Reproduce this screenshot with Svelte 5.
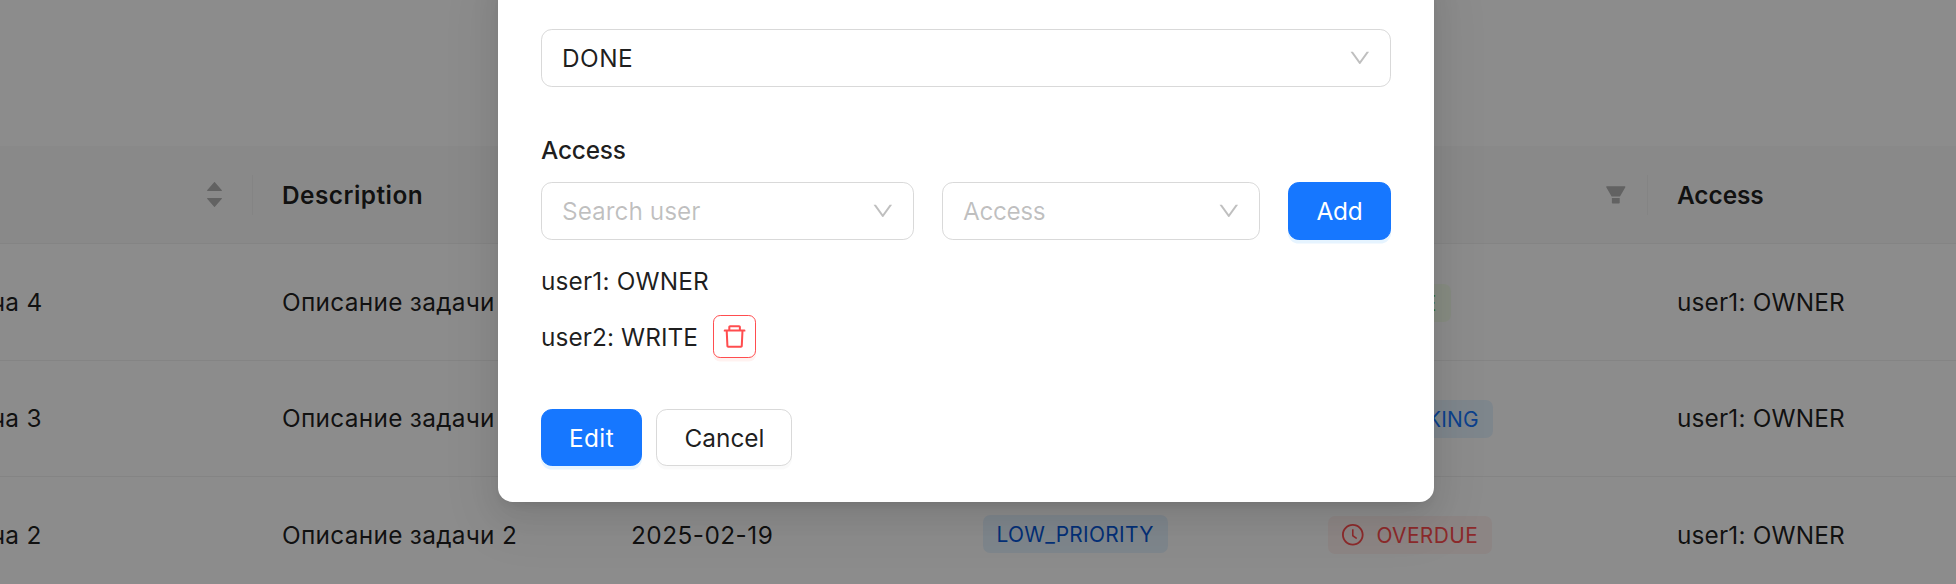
<script>
  const clock = [
    'M512 64C264.6 64 64 264.6 64 512s200.6 448 448 448 448-200.6 448-448S759.4 64 512 64zm0 820c-205.4 0-372-166.6-372-372s166.6-372 372-372 372 166.6 372 372-166.6 372-372 372z',
    'M686.7 638.6L544.1 535.5V288c0-4.4-3.6-8-8-8H488c-4.4 0-8 3.6-8 8v275.4c0 2.6 1.2 5 3.3 6.5l165.4 120.6c3.6 2.6 8.6 1.8 11.2-1.7l28.6-39c2.6-3.7 1.8-8.7-1.8-11.2z',
  ];
  const rows = [
    { title: 'Задача 4', description: 'Описание задачи', status: 'DONE', tone: 'success' },
    { title: 'Задача 3', description: 'Описание задачи', status: 'WORKING', tone: 'processing' },
    { title: 'Задача 2', description: 'Описание задачи 2', date: '2025-02-19', priority: 'LOW_PRIORITY', status: 'OVERDUE', tone: 'error' },
  ];
</script>

{#snippet arrow()}
  <svg class="icon arrow" viewBox="64 64 896 896"><path d="M884 256h-75c-5.1 0-9.9 2.5-12.9 6.6L512 654.2 227.9 262.6c-3-4.1-7.8-6.6-12.9-6.6h-75c-6.5 0-10.3 7.4-6.5 12.7l352.6 486.1c12.8 17.6 39 17.6 51.7 0l352.6-486.1c3.9-5.3.1-12.7-6.4-12.7z" /></svg>
{/snippet}

<div class="page">
  <div class="table">
    <div class="row head">
      <div class="cell sep sorter">
        <span class="carets">
          <svg viewBox="165 300 694 424"><path d="M858.9 689L530.5 308.2c-9.4-10.9-27.5-10.9-37 0L165.1 689c-12.2 14.2-1.2 35 18.5 35h656.8c19.7 0 30.7-20.8 18.5-35z" /></svg>
          <svg viewBox="165 300 694 424"><path d="M840.4 300H183.6c-19.7 0-30.7 20.8-18.5 35l328.4 380.8c9.4 10.9 27.5 10.9 37 0L858.9 335c12.2-14.2 1.2-35-18.5-35z" /></svg>
        </span>
      </div>
      <div class="cell"><span class="wide">Description</span></div>
      <div class="cell"></div>
      <div class="cell"></div>
      <div class="cell sep filter">
        <svg class="icon" viewBox="64 64 896 896"><path d="M349 838c0 17.7 14.2 32 31.8 32h262.4c17.6 0 31.8-14.3 31.8-32V642H349v196zm531.1-684H143.9c-24.5 0-39.8 26.7-27.5 48l221.3 376h348.8l221.3-376c12.1-21.3-3.2-48-27.7-48z" /></svg>
      </div>
      <div class="cell"><span class="tight">Access</span></div>
    </div>
    {#each rows as r}
      <div class="row">
        <div class="cell title">{r.title}</div>
        <div class="cell">{r.description}</div>
        <div class="cell date">{r.date ?? ''}</div>
        <div class="cell">
          {#if r.priority}<span class="tag low">{r.priority}</span>{/if}
        </div>
        <div class="cell status">
          <span class="tag {r.tone}">
            <svg class="icon" viewBox="64 64 896 896">
              {#each clock as d}<path {d} />{/each}
            </svg>
            <span>{r.status}</span>
          </span>
        </div>
        <div class="cell user">user1: OWNER</div>
      </div>
    {/each}
  </div>
</div>

<div class="mask">
  <div class="modal">
    <div class="select"><span class="wide">DONE</span>{@render arrow()}</div>
    <div class="label">Access</div>
    <div class="add-row">
      <div class="select who placeholder"><span>Search user</span>{@render arrow()}</div>
      <div class="select level placeholder"><span class="tighter">Access</span>{@render arrow()}</div>
      <button class="btn primary add">Add</button>
    </div>
    <div class="member"><span class="owner">user1: OWNER</span></div>
    <div class="member second">
      <span class="writer">user2: WRITE</span>
      <button class="trash" aria-label="Delete">
        <svg viewBox="64 64 896 896"><path d="M360 184h-8c4.4 0 8-3.6 8-8v8h304v-8c0 4.4 3.6 8 8 8h-8v72h72v-80c0-35.3-28.7-64-64-64H352c-35.3 0-64 28.7-64 64v80h72v-72zm504 72H160c-17.7 0-32 14.3-32 32v32c0 4.4 3.6 8 8 8h60.4l24.7 523c1.6 34.1 29.8 61 63.9 61h454c34.2 0 62.3-26.8 63.9-61l24.7-523H888c4.4 0 8-3.6 8-8v-32c0-17.7-14.3-32-32-32zM731.3 840H292.7l-24.2-512h487l-24.2 512z" /></svg>
      </button>
    </div>
    <div class="actions">
      <button class="btn primary edit">Edit</button>
      <button class="btn cancel">Cancel</button>
    </div>
  </div>
</div>

<style>
  :global(body) { overflow: hidden; }
  .page, .mask {
    box-sizing: border-box;
    width: 1956px;
    height: 584px;
    overflow: hidden;
    font: 24.4px/40px Inter, "Liberation Sans", sans-serif;
    color: rgba(0, 0, 0, 0.88);
  }
  .page { background: #fff; padding-top: 146px; }
  svg { display: block; fill: currentColor; flex: none; }
  .icon { width: 21.6px; height: 21.6px; }

  .row {
    display: grid;
    grid-template-columns: 253px 350px 351px 345px 349px 308px;
    box-sizing: border-box;
    height: 116px;
    border-bottom: 1px solid #f0f0f0;
    letter-spacing: 0.29px;
  }
  .row:nth-child(2) { height: 117px; }
  .row:nth-child(4) { height: 117px; }
  .row.head { height: 98px; background: #fafafa; font-weight: 600; }
  .cell { display: flex; align-items: center; padding-left: 29px; white-space: nowrap; min-width: 0; position: relative; }
  .row:nth-child(3) .cell:not(.status) { padding-bottom: 1px; }
  .title { padding-left: 0; margin-left: -68px; }
  .date { letter-spacing: 0.45px; padding-left: 28px; }
  .user { letter-spacing: 0.16px; }
  .wide { letter-spacing: 0.47px; }
  .tight { letter-spacing: -0.05px; }
  .tighter { letter-spacing: -0.4px; }
  .sep::after {
    content: "";
    position: absolute;
    right: 0;
    top: 29px;
    width: 1px;
    height: 40px;
    background: #f0f0f0;
  }
  .sorter { justify-content: flex-end; padding-right: 31.5px; color: #b2b2b2; }
  .carets { display: grid; gap: 7px; }
  .carets svg { width: 15px; height: 9px; }
  .filter { justify-content: flex-end; padding-right: 21.6px; color: #b2b2b2; }

  .tag {
    display: flex;
    align-items: center;
    gap: 12.6px;
    box-sizing: border-box;
    height: 38px;
    padding: 0 14.2px;
    border-radius: 7.2px;
    font-size: 20.9px;
    line-height: 39px;
  }
  .low { background: #e6f4ff; color: #0958d9; margin-top: -2px; padding: 0 14.4px 0 13.5px; letter-spacing: 0.3px; }
  .processing { background: #e6f4ff; color: #1677ff; letter-spacing: 0.2px; margin-top: 1px; }
  .success { background: #f6ffed; color: #52c41a; letter-spacing: 0.2px; margin-top: 2px; }
  .error { background: #fff2f0; color: #ff4d4f; letter-spacing: 0.42px; }
  .status .tag > span { padding-top: 1px; }

  .mask { position: absolute; inset: 0; background: rgba(0, 0, 0, 0.45); }
  .modal {
    box-sizing: border-box;
    width: 936px;
    height: 532px;
    margin: -30px 0 0 498px;
    padding: 59px 43px 0;
    background: #fff;
    border-radius: 14.4px;
    box-shadow: 0 10.8px 28.8px 0 rgba(0, 0, 0, 0.08), 0 5.4px 10.8px -7.2px rgba(0, 0, 0, 0.12), 0 16.2px 50.4px 14.4px rgba(0, 0, 0, 0.05);
  }
  .select {
    box-sizing: border-box;
    height: 58px;
    padding: 0 19px 0 20px;
    border: 1px solid #d9d9d9;
    border-radius: 10.8px;
    display: flex;
    align-items: center;
    justify-content: space-between;
  }
  .placeholder { color: rgba(0, 0, 0, 0.25); }
  .arrow { color: rgba(0, 0, 0, 0.25); }
  .label { margin-top: 43px; height: 52px; font-weight: 500; letter-spacing: -0.2px; }
  .add-row { display: flex; gap: 28px; }
  .who { width: 373px; }
  .level { width: 318px; }
  .btn {
    box-sizing: border-box;
    height: 57px;
    padding: 0;
    border: 1px solid #d9d9d9;
    border-radius: 10.8px;
    background: #fff;
    font: inherit;
    color: inherit;
    box-shadow: 0 3.6px 0 rgba(0, 0, 0, 0.02);
  }
  .primary { border-color: #1677ff; background: #1677ff; color: #fff; box-shadow: 0 3.6px 0 rgba(5, 145, 255, 0.1); }
  .add { width: 103px; height: 58px; letter-spacing: -0.3px; }
  .member { display: flex; align-items: center; height: 43px; margin-top: 19px; }
  .second { margin-top: 13px; gap: 15px; }
  .owner { letter-spacing: 0.16px; }
  .writer { letter-spacing: 0.08px; }
  .trash {
    box-sizing: border-box;
    display: grid;
    place-items: center;
    width: 43px;
    height: 43px;
    padding: 0;
    border: 1px solid #ff4d4f;
    border-radius: 7.2px;
    background: #fff;
    color: #ff4d4f;
    box-shadow: 0 3.6px 0 rgba(255, 38, 5, 0.06);
  }
  .trash svg { width: 25.2px; height: 25.2px; }
  .actions { display: flex; gap: 14px; margin-top: 51px; }
  .edit { width: 101px; letter-spacing: 0.4px; }
  .cancel { width: 136px; padding-left: 1px; }
</style>
